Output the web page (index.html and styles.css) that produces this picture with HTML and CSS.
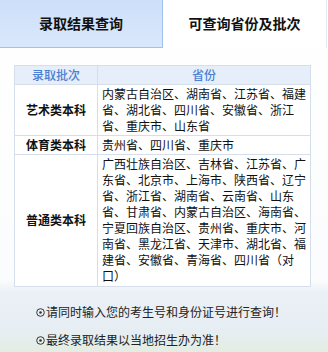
FILE: index.html
```html
<!DOCTYPE html>
<html lang="zh-CN">
<head>
<meta charset="utf-8">
<link rel="stylesheet" href="styles.css">
</head>
<body>
<div class="page">
  <div class="tabs">
    <div class="tab tab-active">录取结果查询</div>
    <div class="tab">可查询省份及批次</div>
  </div>
  <table class="grid">
    <colgroup><col class="c1"><col class="c2"></colgroup>
    <thead>
      <tr><th>录取批次</th><th>省份</th></tr>
    </thead>
    <tbody>
      <tr><td class="kind">艺术类本科</td><td class="prov">内蒙古自治区、湖南省、江苏省、福建省、湖北省、四川省、安徽省、浙江省、重庆市、山东省</td></tr>
      <tr><td class="kind">体育类本科</td><td class="prov">贵州省、四川省、重庆市</td></tr>
      <tr><td class="kind">普通类本科</td><td class="prov">广西壮族自治区、吉林省、江苏省、广东省、北京市、上海市、陕西省、辽宁省、浙江省、湖南省、云南省、山东省、甘肃省、内蒙古自治区、海南省、宁夏回族自治区、贵州省、重庆市、河南省、黑龙江省、天津市、湖北省、福建省、安徽省、青海省、四川省（对口）</td></tr>
    </tbody>
  </table>
  <div class="notes">
    <p class="note"><svg class="dot" width="9" height="9" viewBox="0 0 9 9"><circle cx="4.5" cy="4.5" r="3.8" fill="none" stroke="#333" stroke-width="1"/><circle cx="4.5" cy="4.5" r="1.3" fill="#333"/></svg>请同时输入您的考生号和身份证号进行查询！</p>
    <p class="note"><svg class="dot" width="9" height="9" viewBox="0 0 9 9"><circle cx="4.5" cy="4.5" r="3.8" fill="none" stroke="#333" stroke-width="1"/><circle cx="4.5" cy="4.5" r="1.3" fill="#333"/></svg>最终录取结果以当地招生办为准！</p>
  </div>
</div>
</body>
</html>
```
FILE: styles.css
```css
* { box-sizing: border-box; }
html, body { margin: 0; padding: 0; }
body {
  width: 328px;
  height: 352px;
  overflow: hidden;
  font-family: "Noto Sans CJK SC", "Microsoft YaHei", sans-serif;
  color: #111;
  background: #ffffff;
}
.page {
  display: flex;
  flex-direction: column;
  height: 352px;
  background: linear-gradient(#ffffff 0, #fbfcfd 280px, #eaf0f6 293px, #e7eef3 330px, #e3ede2 352px);
}
.tabs {
  display: flex;
  width: 327px;
  height: 48px;
  border-right: 1px solid #e4e9f0;
  background: #fff;
}
.tab {
  flex: 1 1 0;
  display: flex;
  align-items: center;
  justify-content: center;
  font-size: 14px;
  font-weight: 700;
  color: #111;
  padding-bottom: 2px;
}
.tab-active {
  flex: 0 0 163px;
  background: linear-gradient(#cde0fa, #d9e7fb);
  border-right: 1px solid #9fc2ec;
  border-bottom: 1px solid #9fc2ec;
  height: 48px;
}
.grid {
  margin: 17px 0 0 14px;
  width: 297px;
  border-collapse: collapse;
  font-size: 12px;
  line-height: 16px;
  table-layout: fixed;
  background: #fff;
}
.c1 { width: 83px; }
.grid th, .grid td {
  border: 1px solid #d6ddeb;
  padding: 1px 4px;
}
.grid tbody tr:last-child td { padding-bottom: 2px; }
.grid th {
  background: #e5eef9;
  color: #4b80d3;
  font-weight: 500;
  text-align: center;
}
.kind {
  font-weight: 700;
  text-align: center;
  vertical-align: middle;
}
.prov {
  text-align: left;
  line-break: strict;
}
.notes {
  padding: 17px 0 0 36px;
  display: flex;
  flex-direction: column;
  gap: 12px;
}
.note {
  margin: 0;
  font-size: 12px;
  line-height: 16px;
  color: #222;
  display: flex;
  align-items: center;
  white-space: nowrap;
}
.dot { margin-right: 1px; flex: none; }
```
